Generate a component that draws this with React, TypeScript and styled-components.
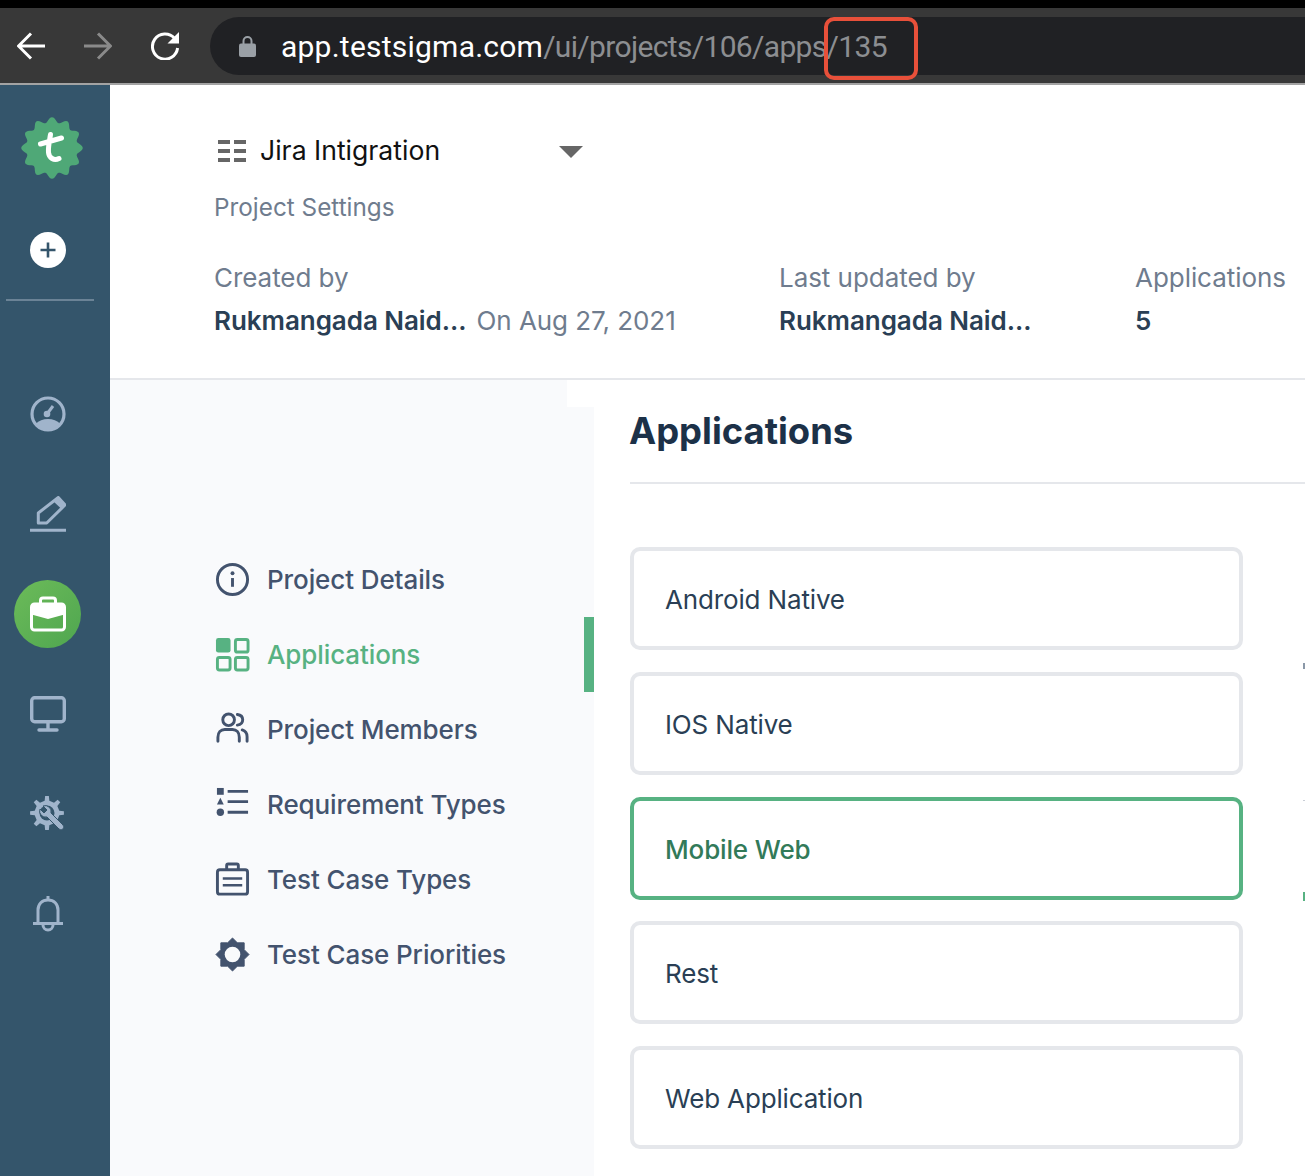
import React from "react";
import styled, { createGlobalStyle } from "styled-components";

const Global = createGlobalStyle`
  html, body { margin: 0; padding: 0; background: #fff; }
  body { font-family: Inter, "Liberation Sans", sans-serif; }
  * { box-sizing: border-box; }
`;

const Page = styled.div`
  width: 1305px;
  height: 1176px;
  overflow: hidden;
  display: flex;
  flex-direction: column;
`;

const BrowserBar = styled.div`
  height: 85px;
  flex: none;
  display: flex;
  align-items: center;
  padding-left: 17px;
  background: #383838;
  border-top: 8px solid #000;
  border-bottom: 2px solid #a3a3a3;
`;

const NavGlyph = styled.svg<{ $gap: number }>`
  flex: none;
  margin-right: ${(p) => p.$gap}px;
`;

const UrlPill = styled.div`
  position: relative;
  flex: 1;
  height: 58px;
  display: flex;
  align-items: center;
  padding-left: 29px;
  background: #202124;
  border-radius: 29px 0 0 29px;
`;

const Url = styled.div`
  margin-left: 25px;
  padding-top: 1px;
  font-family: Roboto, sans-serif;
  font-size: 30px;
  letter-spacing: -0.66px;
  color: #8c8e91;
  white-space: nowrap;
  b {
    font-weight: 400;
    letter-spacing: 0.23px;
    color: #fff;
  }
`;

const Callout = styled.div`
  position: absolute;
  left: 614px;
  top: 0;
  width: 94px;
  height: 63px;
  border: 4px solid #e8503a;
  border-radius: 10px;
`;

const Body = styled.div`
  flex: 1;
  display: flex;
  min-height: 0;
`;

const Rail = styled.aside`
  width: 110px;
  flex: none;
  background: #34556b;
  display: flex;
  flex-direction: column;
`;

const LogoSlot = styled.div`
  height: 126px;
  width: 103px;
  display: flex;
  align-items: center;
  justify-content: center;
`;

const PlusSlot = styled.div`
  height: 78px;
  width: 96px;
  display: flex;
  align-items: center;
  justify-content: center;
`;

const RailRule = styled.div`
  width: 88px;
  height: 2px;
  margin: 10px 0 63px 6px;
  background: #6b8396;
`;

const RailItem = styled.div`
  width: 95px;
  height: 100px;
  display: flex;
  align-items: center;
  justify-content: center;
`;

const RailActive = styled.div`
  width: 67px;
  height: 68px;
  border-radius: 50%;
  display: flex;
  align-items: center;
  justify-content: center;
  background: linear-gradient(135deg, #6cbb59, #4fa650);
`;

const Main = styled.main`
  flex: 1;
  display: flex;
  flex-direction: column;
  min-width: 0;
`;

const Header = styled.header`
  height: 295px;
  flex: none;
  padding: 46px 0 0 104px;
  border-bottom: 2px solid #e5e7eb;
`;

const ProjectRow = styled.div`
  height: 40px;
  width: 369px;
  display: flex;
  align-items: center;
  padding-left: 4px;
`;

const ProjectName = styled.span`
  flex: 1;
  margin-left: 14px;
  padding-bottom: 2px;
  font-size: 26.6px;
  color: #111;
`;

const Caret = styled.svg`
  margin-top: 2px;
`;

const HeaderSub = styled.div`
  margin-top: 18px;
  font-size: 24.3px;
  line-height: 36px;
  color: #6f7c8e;
`;

const Meta = styled.div`
  margin-top: 30px;
  display: grid;
  grid-template-columns: 565px 356px auto;
  grid-auto-rows: 44px;
  align-items: center;
  font-size: 26px;
  letter-spacing: -0.05px;
  white-space: nowrap;
`;

const MetaLabel = styled.span`
  color: #6f7c8e;
`;

const MetaValue = styled.span`
  padding-bottom: 1px;
  font-weight: 600;
  color: #2a3f55;
`;

const MetaNote = styled.span`
  margin-left: 10px;
  font-weight: 400;
  color: #6f7c8e;
`;

const Lower = styled.div`
  position: relative;
  flex: 1;
  display: flex;
  min-height: 0;
`;

const SideNav = styled.nav`
  position: relative;
  width: 484px;
  flex: none;
  padding: 162px 0 0 105px;
  background: #f9fafc;
`;

const Notch = styled.div`
  position: absolute;
  top: 0;
  right: 0;
  width: 27px;
  height: 27px;
  background: #fff;
`;

const NavItem = styled.div<{ $active?: boolean }>`
  position: relative;
  height: 75px;
  display: flex;
  align-items: center;
  gap: 17px;
  font-size: 26px;
  letter-spacing: -0.1px;
  font-weight: 500;
  color: ${(p) => (p.$active ? "#57b282" : "#43536e")};
  &::after {
    content: "";
    display: ${(p) => (p.$active ? "block" : "none")};
    position: absolute;
    top: 0;
    right: 0;
    width: 10px;
    height: 75px;
    background: #57b282;
  }
`;

const NavIcon = styled.svg`
  width: 35px;
  height: 35px;
  flex: none;
`;

const Content = styled.section`
  flex: 1;
  padding: 26px 0 0 36px;
  min-width: 0;
`;

const Title = styled.h1`
  margin: 0 0 0 -1px;
  height: 50px;
  font-size: 36.4px;
  line-height: 50px;
  font-weight: 700;
  color: #1c3148;
`;

const Divider = styled.div`
  height: 2px;
  margin: 26px 0 63px;
  background: #e5e7eb;
`;

const Cards = styled.div`
  width: 613px;
  display: flex;
  flex-direction: column;
  gap: 21.75px;
`;

const Card = styled.div<{ $active?: boolean }>`
  height: 103px;
  display: flex;
  align-items: center;
  padding: 2px 0 0 31px;
  border: 4px solid ${(p) => (p.$active ? "#57b282" : "#e5e7eb")};
  border-radius: 10px;
  background: #fff;
  font-size: 26px;
  letter-spacing: -0.15px;
  font-weight: ${(p) => (p.$active ? 500 : 400)};
  color: ${(p) => (p.$active ? "#327a59" : "#2a3f55")};
`;

const EdgeMark = styled.div<{ $top: number; $color: string; $h: number }>`
  position: absolute;
  right: 0;
  top: ${(p) => p.$top}px;
  width: 2px;
  height: ${(p) => p.$h}px;
  background: ${(p) => p.$color};
`;

const rail = "#a0b4cb";

const gearPath = (cx: number, cy: number, rO: number, rI: number, teeth: number) => {
  let d = "";
  const step = (Math.PI * 2) / teeth;
  for (let i = 0; i < teeth; i++) {
    const a = i * step - Math.PI / 2;
    const pts: [number, number][] = [
      [a - step * 0.24, rI],
      [a - step * 0.14, rO],
      [a + step * 0.14, rO],
      [a + step * 0.24, rI],
    ];
    pts.forEach(([t, r]) => {
      d += `${d ? "L" : "M"}${(cx + r * Math.cos(t)).toFixed(2)} ${(cy + r * Math.sin(t)).toFixed(2)}`;
    });
  }
  return d + "Z";
};

const scallopPath = (cx: number, cy: number, rMid: number, amp: number, bumps: number) => {
  let d = "";
  const n = bumps * 12;
  for (let i = 0; i < n; i++) {
    const t = (i / n) * Math.PI * 2 - Math.PI / 2;
    const r = rMid + amp * Math.cos(bumps * (t + Math.PI / 2));
    d += `${i ? "L" : "M"}${(cx + r * Math.cos(t)).toFixed(2)} ${(cy + r * Math.sin(t)).toFixed(2)}`;
  }
  return d + "Z";
};

const Logo = () => (
  <svg width="64" height="64" viewBox="0 0 64 64">
    <path d={scallopPath(32, 32, 28.2, 2.6, 12)} fill="#4fa877" />
    <path d="M30.500 18.500C29.500 25 28 31 28.500 36.500C29 42 34 45 39 42.500M20.500 28 41.500 22" fill="none" stroke="#fff" strokeWidth="5" strokeLinecap="round" />
  </svg>
);

const apps = ["Android Native", "IOS Native", "Mobile Web", "Rest", "Web Application"];

export default function App() {
  return (
    <Page>
      <Global />
      <BrowserBar>
        <NavGlyph $gap={39} width="28" height="28" viewBox="0 0 28 28">
          <path d="M28 14H2M14 1.500 1.500 14 14 26.500" fill="none" stroke="#fff" strokeWidth="3" />
        </NavGlyph>
        <NavGlyph $gap={39} width="28" height="28" viewBox="0 0 28 28">
          <path d="M0 14H26M14 1.500 26.500 14 14 26.500" fill="none" stroke="#8a8a8a" strokeWidth="3" />
        </NavGlyph>
        <NavGlyph $gap={31} width="28" height="28" viewBox="0 0 28 28">
          <path d="M23.500 6.200A12.600 12.600 0 1 0 26.600 16" fill="none" stroke="#fff" strokeWidth="3" />
          <path d="M28 0V11.500H16.500Z" fill="#fff" />
        </NavGlyph>
        <UrlPill>
          <svg width="17" height="22" viewBox="0 0 17 22">
            <path d="M4.500 9V6a4 4 0 0 1 8 0v3" fill="none" stroke="#9aa0a6" strokeWidth="2" />
            <rect x="0" y="8.500" width="17" height="13.500" rx="2" fill="#9aa0a6" />
          </svg>
          <Url>
            <b>app.testsigma.com</b>/ui/projects/106/apps/135
          </Url>
          <Callout />
        </UrlPill>
      </BrowserBar>
      <Body>
        <Rail>
          <LogoSlot>
            <Logo />
          </LogoSlot>
          <PlusSlot>
            <svg width="36" height="36" viewBox="0 0 36 36">
              <circle cx="18" cy="18" r="18" fill="#fff" />
              <path d="M18 10.500v15M10.500 18h15" stroke="#34556b" strokeWidth="2.600" />
            </svg>
          </PlusSlot>
          <RailRule />
          <RailItem>
            <svg width="36" height="36" viewBox="0 0 36 36">
              <circle cx="18" cy="18" r="16" fill="none" stroke={rail} strokeWidth="3.200" />
              <path d="M5.500 28C9 24.500 13 23 18 23s9 1.500 12.500 5C27 32 23 34 18 34S9 32 5.500 28Z" fill={rail} />
              <circle cx="17" cy="18" r="3.300" fill={rail} />
              <path d="M17 18 23 10" stroke={rail} strokeWidth="3" />
            </svg>
          </RailItem>
          <RailItem>
            <svg width="36" height="36" viewBox="0 0 36 36">
              <path d="M8.300 27V17L28.300 1.500 35 9 16.700 27Z" fill="none" stroke={rail} strokeWidth="3" strokeLinejoin="round" />
              <path d="M27 2 34.500 9 31 12.500 23.500 5.500Z" fill={rail} />
              <path d="M0 34.300h36" stroke={rail} strokeWidth="3" />
            </svg>
          </RailItem>
          <RailItem>
            <RailActive>
              <svg width="36" height="36" viewBox="0 0 36 36">
                <path d="M10.500 8V4.500A2.500 2.500 0 0 1 13 2h10a2.500 2.500 0 0 1 2.500 2.500V8" fill="none" stroke="#fff" strokeWidth="3" />
                <rect x="1.500" y="8" width="33" height="26" rx="3" fill="none" stroke="#fff" strokeWidth="3" />
                <path d="M1.500 11a3 3 0 0 1 3-3h27a3 3 0 0 1 3 3v7.500L18 23 1.500 18.500Z" fill="#fff" />
              </svg>
            </RailActive>
          </RailItem>
          <RailItem>
            <svg width="36" height="36" viewBox="0 0 36 36">
              <rect x="1.700" y="1.700" width="32.600" height="24" rx="3" fill="none" stroke={rail} strokeWidth="3.400" />
              <path d="M18 26v8M9 34h18" stroke={rail} strokeWidth="3.400" strokeLinecap="round" />
            </svg>
          </RailItem>
          <RailItem>
            <svg width="36" height="36" viewBox="0 0 36 36">
              <path d={gearPath(17, 17, 17, 12.500, 8)} fill={rail} />
              <circle cx="17" cy="17" r="7.500" fill="#34556b" />
              <path d="M13 10a6 6 0 0 1 8 7L33 29a2.500 2.500 0 0 1-4 4L17 21a6 6 0 0 1-7-8l4 4 3-3Z" fill={rail} stroke="#34556b" strokeWidth="1" />
            </svg>
          </RailItem>
          <RailItem>
            <svg width="30" height="36" viewBox="0 0 30 36">
              <path d="M15 0v4" stroke={rail} strokeWidth="3" />
              <path d="M5 27V14C5 8 9 4 15 4s10 4 10 10v13" fill="none" stroke={rail} strokeWidth="3" />
              <path d="M0.500 27.500h29" stroke={rail} strokeWidth="3" strokeLinecap="round" />
              <path d="M10 29a5 5 0 0 0 10 0" fill="none" stroke={rail} strokeWidth="3" />
            </svg>
          </RailItem>
        </Rail>
        <Main>
          <Header>
            <ProjectRow>
              <svg width="28" height="22" viewBox="0 0 28 22">
                <path d="M0 2h12M16 2h12M0 11h12M16 11h12M0 20h12M16 20h12" stroke="#666" strokeWidth="4" />
              </svg>
              <ProjectName>Jira Intigration</ProjectName>
              <Caret width="24" height="12" viewBox="0 0 24 12">
                <path d="M0 0h24L12 12Z" fill="#666" />
              </Caret>
            </ProjectRow>
            <HeaderSub>Project Settings</HeaderSub>
            <Meta>
              <MetaLabel>Created by</MetaLabel>
              <MetaLabel>Last updated by</MetaLabel>
              <MetaLabel>Applications</MetaLabel>
              <MetaValue>
                Rukmangada Naid...<MetaNote>On Aug 27, 2021</MetaNote>
              </MetaValue>
              <MetaValue>Rukmangada Naid...</MetaValue>
              <MetaValue>5</MetaValue>
            </Meta>
          </Header>
          <Lower>
            <SideNav>
              <Notch />
              <NavItem>
                <NavIcon viewBox="0 0 36 36">
                  <circle cx="18" cy="18" r="15.500" fill="none" stroke="#43536e" strokeWidth="3" />
                  <path d="M18 16.500v9" stroke="#43536e" strokeWidth="3" />
                  <circle cx="18" cy="11.500" r="2" fill="#43536e" />
                </NavIcon>
                Project Details
              </NavItem>
              <NavItem $active>
                <NavIcon viewBox="0 0 36 36">
                  <rect x="1" y="1" width="15" height="15" rx="2.500" fill="#57b282" />
                  <rect x="21" y="2.500" width="13" height="13" rx="2" fill="none" stroke="#57b282" strokeWidth="3" />
                  <rect x="2.500" y="21" width="13" height="13" rx="2" fill="none" stroke="#57b282" strokeWidth="3" />
                  <rect x="21" y="21" width="13" height="13" rx="2" fill="none" stroke="#57b282" strokeWidth="3" />
                </NavIcon>
                Applications
              </NavItem>
              <NavItem>
                <NavIcon viewBox="0 0 36 36">
                  <circle cx="14" cy="8" r="6" fill="none" stroke="#43536e" strokeWidth="3" />
                  <path d="M3 30v-4c0-5 3-8 7-8h8c4 0 7 3 7 8v4" fill="none" stroke="#43536e" strokeWidth="3" strokeLinecap="round" />
                  <path d="M23 2.500c4 .5 5.500 3 5.500 5.500S27 13 23 13.500M28 18.500c3 1 5 4 5 7V30" fill="none" stroke="#43536e" strokeWidth="3" strokeLinecap="round" />
                </NavIcon>
                Project Members
              </NavItem>
              <NavItem>
                <NavIcon viewBox="0 0 36 36">
                  <rect x="2" y="1" width="7" height="7" fill="#43536e" />
                  <path d="M5.500 11 9 18H2Z" fill="#43536e" />
                  <circle cx="5.500" cy="26" r="3.800" fill="#43536e" />
                  <path d="M13 4.500h21M13 15h21M13 26h21" stroke="#43536e" strokeWidth="3" />
                </NavIcon>
                Requirement Types
              </NavItem>
              <NavItem>
                <NavIcon viewBox="0 0 36 36">
                  <path d="M12 8V3.500A1.500 1.500 0 0 1 13.500 2h9A1.500 1.500 0 0 1 24 3.500V8" fill="none" stroke="#43536e" strokeWidth="3" />
                  <rect x="2.500" y="8" width="31" height="25" rx="2.500" fill="none" stroke="#43536e" strokeWidth="3" />
                  <path d="M8 17h20M8 24h20" stroke="#43536e" strokeWidth="2.500" />
                </NavIcon>
                Test Case Types
              </NavItem>
              <NavItem>
                <NavIcon viewBox="0 0 36 36">
                  <path d="M18 1l5 5 7 0 0 7 5 5-5 5 0 7-7 0-5 5-5-5-7 0 0-7-5-5 5-5 0-7 7 0Z" fill="#43536e" stroke="#43536e" strokeLinejoin="round" />
                  <circle cx="18" cy="18" r="8" fill="#f9fafc" />
                </NavIcon>
                Test Case Priorities
              </NavItem>
            </SideNav>
            <Content>
              <Title>Applications</Title>
              <Divider />
              <Cards>
                {apps.map((a) => (
                  <Card key={a} $active={a === "Mobile Web"}>
                    {a}
                  </Card>
                ))}
              </Cards>
            </Content>
            <EdgeMark $top={283} $h={6} $color="#8b98a8" />
            <EdgeMark $top={420} $h={1} $color="#c9ced6" />
            <EdgeMark $top={512} $h={9} $color="#57b282" />
          </Lower>
        </Main>
      </Body>
    </Page>
  );
}
